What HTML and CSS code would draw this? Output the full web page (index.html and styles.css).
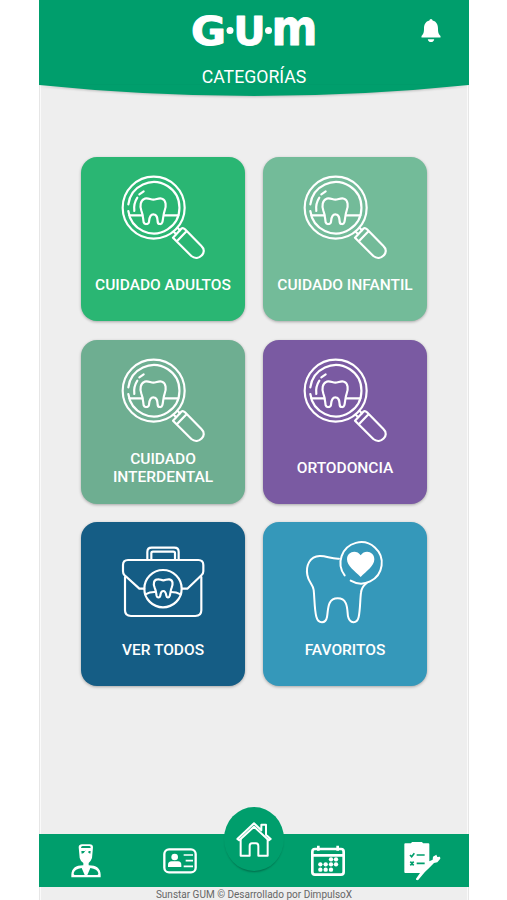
FILE: index.html
```html
<!DOCTYPE html>
<html lang="es">

<head>
    <meta charset="utf-8">
    <meta name="viewport" content="width=device-width, initial-scale=1">
    <link rel="stylesheet" href="styles.css">
    <title>GUM - Categorías</title>
</head>

<body>
    <!-- shared icons -->
    <svg class="sprite">
        <symbol id="lupa" viewBox="135 70 261 264">
            <g fill="none" stroke="currentColor" stroke-width="6.500" stroke-linecap="round" stroke-linejoin="round">
                <circle cx="236" cy="174" r="93"/>
                <path d="M160 164A77 77 0 1 1 160 184"/>
                <path d="M178 184A58 58 0 0 1 187 144M193 134L206 125"/>
                <path d="M163 197H202M268 197H310"/>
                <path d="M206 218C204 207 204 195 199 183C194 170 196 151 209 147C220 144 226 150 235 150C244 150 251 144 261 147C274 151 274 170 269 183C264 196 265 207 262 218C260 225 249 225 248 217C247 207 248 194 235 194C223 194 223 207 222 217C220 225 208 225 206 218Z"/>
                <path d="M296 246L303 253M308 235L315 242"/>
                <path d="M319 237L294 264L349 319C371 337 399 307 380 290L330 239Q324 233 319 237ZM333 246L307 273"/>
            </g>
        </symbol>
        <symbol id="maletin" viewBox="135 70 261 264">
            <g fill="none" stroke="currentColor" stroke-width="6.500" stroke-linecap="round" stroke-linejoin="round">
                <path d="M217 134V112Q217 99 230 99H298Q311 99 311 112V134M229 134V116Q229 111 234 111H295Q300 111 300 116V134"/>
                <path d="M208 222H193L148 181Q144 177 144 170V151Q144 136 159 136H370Q385 136 385 151V170Q385 177 380 181L337 222H321"/>
                <path d="M150 187V287Q150 304 168 304H361Q379 304 379 287V187"/>
                <circle cx="264" cy="222" r="56"/>
                <path d="M211 239Q226 231 241 232M288 232Q304 232 317 239"/>
                <path d="M245 244C243 234 243 227 239 219C234 207 236 195 248 194C256 193 258 197 265 197C272 197 275 193 283 194C295 196 294 209 290 219C286 228 287 235 284 244C282 250 275 250 274 243C273 236 272 229 265 229C257 229 257 236 256 243C254 250 247 250 245 244Z"/>
            </g>
        </symbol>
        <symbol id="favorito" viewBox="135 70 261 264">
            <g fill="none" stroke="currentColor" stroke-width="6" stroke-linecap="round" stroke-linejoin="round">
                <path d="M263 182A62 62 0 1 1 281 198"/>
                <path d="M246 132C220 133 209 123 188 124C158 125 146 153 151 181C154 202 169 211 170 226C173 253 172 283 178 306C184 328 206 328 210 307C214 286 210 251 242 251C274 251 270 286 273 305C278 328 300 328 305 307C310 284 309 256 312 234C313 222 319 213 329 205"/>
            </g>
            <path fill="currentColor" d="M311 187C294 170 270 154 270 134C270 111 298 103 311 122C324 103 352 111 352 134C352 154 328 170 311 187Z"/>
        </symbol>
    </svg>

    <div class="app">
        <header class="header">
            <div class="topbar">
                <svg class="logo" viewBox="0 0 126 34">
                    <text x="0" y="31.500" font-size="39" textLength="35" lengthAdjust="spacingAndGlyphs">G</text>
                    <circle cx="39" cy="17.500" r="3.500"/>
                    <text x="42.500" y="31.500" font-size="39" textLength="32" lengthAdjust="spacingAndGlyphs">U</text>
                    <circle cx="77.500" cy="17.500" r="3.500"/>
                    <text x="80.500" y="31.500" font-size="49" textLength="46" lengthAdjust="spacingAndGlyphs">m</text>
                </svg>
                <svg class="bell" viewBox="0 0 20 24">
                    <path fill="#fff" d="M10 0Q11.500 0 11.600 1.500C15.500 2.500 17 5.500 17 9.500C17 13.500 17.500 15 19.500 17V18.500H.5V17C2.500 15 3 13.500 3 9.500C3 5.500 4.500 2.500 8.400 1.500Q8.500 0 10 0ZM6.800 20.200H13.200Q12.800 23 10 23Q7.200 23 6.800 20.200Z"/>
                </svg>
            </div>
            <h1>CATEGORÍAS</h1>
        </header>
        <svg class="curve" viewBox="0 0 430 12" preserveAspectRatio="none">
            <path d="M0 0H430Q215 22 0 0Z"/>
        </svg>

        <main class="grid">
            <a class="card adultos"><svg><use href="#lupa"/></svg><span>CUIDADO ADULTOS</span></a>
            <a class="card infantil"><svg><use href="#lupa"/></svg><span>CUIDADO INFANTIL</span></a>
            <a class="card interdental"><svg><use href="#lupa"/></svg><span>CUIDADO<br>INTERDENTAL</span></a>
            <a class="card ortodoncia"><svg><use href="#lupa"/></svg><span>ORTODONCIA</span></a>
            <a class="card todos"><svg><use href="#maletin"/></svg><span>VER TODOS</span></a>
            <a class="card favoritos"><svg><use href="#favorito"/></svg><span>FAVORITOS</span></a>
        </main>

        <nav class="navbar">
            <a>
                <svg width="32" height="36" viewBox="0 0 96 108">
                    <path fill="#fff" d="M26 12Q27 4 36 4H59Q69 4 69 13L66 45Q62 56 56 60V67Q91 67 92 95V103H4V95Q5 67 40 67V60Q32 56 29 45Z"/>
                    <path fill="#009e6c" d="M33 14Q33 9 38 9H58Q63 9 62 14L61 15H34ZM34 24H62L61 32Q56 30 53 26L47 22Q43 31 35 32ZM35 75L44 96H14Q11 96 11 91Q14 78 35 75ZM61 75L52 96H82Q85 96 85 91Q82 78 61 75Z"/>
                    <circle cx="51" cy="24" r="5" fill="#fff"/>
                </svg>
            </a>
            <a>
                <svg width="34" height="26" viewBox="0 0 102 78">
                    <rect x="4" y="4" width="94" height="69" rx="14" fill="none" stroke="#fff" stroke-width="7"/>
                    <circle cx="35" cy="27" r="10" fill="#fff"/>
                    <path fill="#fff" d="M15 57V51Q15 40 26 40H45Q55 40 55 51V57Z"/>
                    <path stroke="#fff" stroke-width="5" d="M62 21H90M68 38H90M62 55H90"/>
                </svg>
            </a>
            <a class="home">
                <svg width="36" height="36" viewBox="0 0 108 108" fill="none" stroke="#fff" stroke-width="6" stroke-linecap="round" stroke-linejoin="round">
                    <path d="M4 54L54 7L76 28V11H90V41L104 54L98 58L54 17L10 58Z"/>
                    <path d="M14 54V104H41V75Q41 67 48 67H60Q67 67 67 75V104H95V54"/>
                </svg>
            </a>
            <a>
                <svg width="34" height="32" viewBox="0 0 102 96">
                    <rect x="4" y="12" width="94" height="77" rx="8" fill="none" stroke="#fff" stroke-width="8"/>
                    <path stroke="#fff" stroke-width="8" d="M4 31H98M22 2V17M80 2V17"/>
                    <g fill="#fff">
                        <circle cx="60" cy="43" r="6.500"/><circle cx="75" cy="43" r="6.500"/>
                        <circle cx="28" cy="58" r="6.500"/><circle cx="44" cy="58" r="6.500"/><circle cx="60" cy="58" r="6.500"/><circle cx="75" cy="58" r="6.500"/>
                        <circle cx="28" cy="74" r="6.500"/><circle cx="44" cy="74" r="6.500"/><circle cx="60" cy="74" r="6.500"/>
                    </g>
                </svg>
            </a>
            <a>
                <svg width="37" height="40" viewBox="0 0 111 120">
                    <path fill="#fff" d="M1 9Q1 7 4 7H21L24 3H54L57 7H73Q76 7 76 10V61L86 56L87 47L97 41L100 48L108 47L109 53L100 64L90 66L76 80L62 94L42 118L36 116V113L48 96H4Q1 96 1 93Z"/>
                    <path fill="none" stroke="#009e6c" stroke-width="5" d="M18 42L23 47L31 37M38 42H62M19 62L29 73M29 62L19 73M38 67H62"/>
                </svg>
            </a>
        </nav>
        <footer>Sunstar GUM © Desarrollado por DimpulsoX</footer>
    </div>
</body>

</html>
```
FILE: styles.css
```css
* {
    box-sizing: border-box;
}

body {
    margin: 0;
    background: #fff;
    font-family: Roboto, sans-serif;
}

.sprite {
    display: none;
}

.app {
    display: flex;
    flex-direction: column;
    width: 430px;
    height: 900px;
    margin: 0 auto 0 39px;
    background: #eee;
    overflow: hidden;
    box-shadow: inset 1px 0 #e6e6e6, inset 2px 0 #fafafa, inset -1px 0 #e6e6e6, inset -2px 0 #fafafa;
}

.header {
    flex: none;
    height: 85px;
    background: #009e6c;
    color: #fff;
}

.topbar {
    display: flex;
    justify-content: space-between;
    align-items: flex-start;
    padding: 13px 28px 0 152px;
    height: 67px;
}

.logo {
    width: 126px;
    height: 34px;
    font-family: "DejaVu Sans", sans-serif;
    font-weight: bold;
    fill: #fff;
    overflow: visible;
}

.logo text {
    stroke: #fff;
    stroke-width: 1px;
    stroke-linejoin: round;
}

.bell {
    width: 20px;
    height: 24px;
    margin-top: 6px;
}

h1 {
    margin: 0;
    font-size: 17.7px;
    font-weight: 400;
    line-height: 21px;
    text-align: center;
}

.curve {
    display: block;
    flex: none;
    width: 100%;
    height: 12px;
    fill: #009e6c;
    overflow: visible;
    filter: drop-shadow(0 1px 1px rgba(0, 0, 0, 0.2));
}

.grid {
    display: grid;
    grid-template-columns: 164px 164px;
    grid-auto-rows: 164px;
    gap: 18.5px 18px;
    flex: 1;
    padding: 60.4px 42px 0;
}

.card {
    display: flex;
    flex-direction: column;
    align-items: center;
    padding-top: 16px;
    border-radius: 16px;
    color: #fff;
    box-shadow: 0 1px 3px rgba(0, 0, 0, 0.3);
}

.card svg {
    flex: none;
    width: 87px;
    height: 88px;
}

.card span {
    display: flex;
    align-items: center;
    height: 48px;
    font-size: 15.5px;
    font-weight: 500;
    line-height: 18px;
    text-align: center;
}

.adultos {
    background: #2ab673;
}

.infantil {
    background: #73bb99;
}

.interdental {
    background: #6eae91;
}

.ortodoncia {
    background: #7a5aa2;
}

.todos {
    background: #155d85;
}

.favoritos {
    background: #3598ba;
}

.navbar {
    display: grid;
    grid-template-columns: 94px 94px 54px 94px 94px;
    flex: none;
    height: 53px;
    background: #009e6c;
}

.navbar a {
    display: flex;
    align-items: center;
    justify-content: center;
}

.navbar .home {
    justify-self: center;
    width: 60px;
    height: 64px;
    margin-top: -27px;
    border-radius: 50%;
    background: #009e6c;
    box-shadow: 0 2px 2px -1px rgba(0, 0, 0, 0.3);
}

footer {
    flex: none;
    height: 13px;
    font-size: 10px;
    line-height: 16px;
    text-align: center;
    color: #666;
}
```
